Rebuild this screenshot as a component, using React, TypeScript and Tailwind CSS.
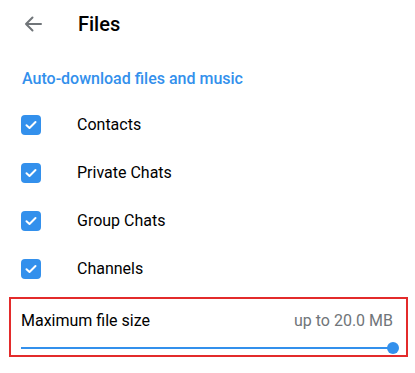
import React from "react";

const CheckRow = ({ label }: { label: string }) => (
  <div className="flex h-[48px] items-center pl-[21px]">
    <div className="flex h-[20px] w-[20px] items-center justify-center rounded-[4px] bg-[#3390ec]">
      <svg width="12" height="10" viewBox="0 0 12 10" fill="none">
        <path d="M1.5 5.2 L4.5 8 L10.5 2" stroke="white" strokeWidth="2" strokeLinecap="round" strokeLinejoin="round" />
      </svg>
    </div>
    <span className="ml-[36px] text-[16px] text-black">{label}</span>
  </div>
);

export default function App() {
  return (
    <div className="h-[373px] w-[415px] bg-white" style={{ fontFamily: "Roboto, 'Liberation Sans', sans-serif" }}>
      <div className="flex h-[48px] items-center">
        <div className="ml-[24px] flex h-[18px] w-[18px] items-center justify-center">
          <svg width="18" height="16" viewBox="0 0 18 16" fill="none">
            <path d="M17 8 H2 M8.5 1.5 L2 8 L8.5 14.5" stroke="#707579" strokeWidth="2" strokeLinecap="round" strokeLinejoin="round" />
          </svg>
        </div>
        <span className="ml-[36px] text-[20px] font-medium text-black">Files</span>
      </div>
      <div className="mt-[21px] flex h-[20px] items-center pl-[22px] text-[16px] font-medium text-[#3390ec]">
        Auto-download files and music
      </div>
      <div className="mt-[12px]">
        <CheckRow label="Contacts" />
        <CheckRow label="Private Chats" />
        <CheckRow label="Group Chats" />
        <CheckRow label="Channels" />
      </div>
      <div className="ml-[9px] mr-[7px] mt-[4px] h-[60px] border-2 border-[#e32b2b] pl-[10px] pr-[13px]">
        <div className="mt-[10px] flex items-center justify-between">
          <span className="text-[16px] text-black">Maximum file size</span>
          <span className="text-[16px] text-[#707579]">up to 20.0 MB</span>
        </div>
        <div className="relative mt-[14px] h-[2px] bg-[#3390ec]">
          <div className="absolute right-[-6px] top-[-5px] h-[12px] w-[12px] rounded-full bg-[#3390ec]" />
        </div>
      </div>
    </div>
  );
}
